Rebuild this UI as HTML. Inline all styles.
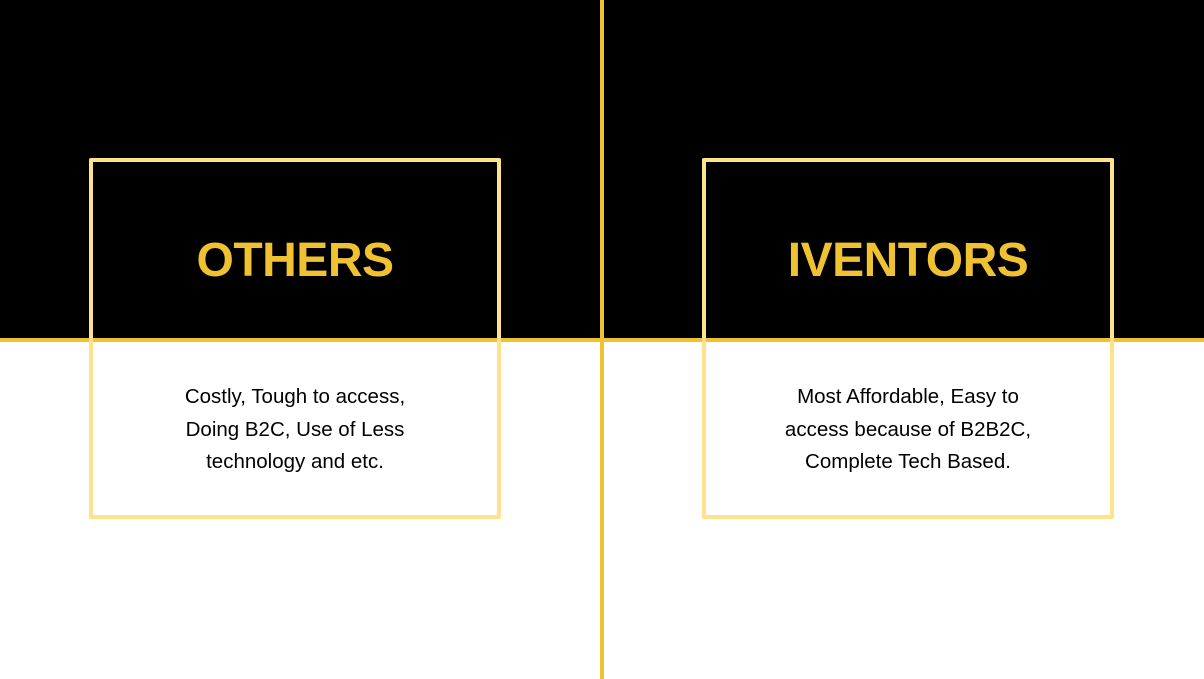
<!DOCTYPE html>
<html><head><style>
body{margin:0;width:1204px;height:679px;position:relative;overflow:hidden;background:#fff;font-family:"Liberation Sans",sans-serif;}
.top{position:absolute;left:0;top:0;width:1204px;height:338px;background:#000;}
.hl{position:absolute;left:0;top:338px;width:1204px;height:4px;background:#F0C232;}
.vl{position:absolute;left:600px;top:0;width:4px;height:679px;background:#F0C232;}
.box{position:absolute;top:158px;width:404px;height:353px;border:4px solid #FFE28C;border-radius:2px;}
.t{position:absolute;left:0;right:0;top:69px;text-align:center;color:#F0C232;font-weight:bold;font-size:48px;letter-spacing:-0.5px;line-height:60px;}
.d{position:absolute;left:0;right:0;top:219px;text-align:center;color:#000;font-size:20.5px;line-height:32.5px;}
</style></head><body>
<div class="top"></div>
<div class="hl"></div>
<div class="vl"></div>
<div class="box" style="left:89px"><div class="t">OTHERS</div><div class="d">Costly, Tough to access,<br>Doing B2C, Use of Less<br>technology and etc.</div></div>
<div class="box" style="left:702px"><div class="t">IVENTORS</div><div class="d">Most Affordable, Easy to<br>access because of B2B2C,<br>Complete Tech Based.</div></div>
</body></html>
